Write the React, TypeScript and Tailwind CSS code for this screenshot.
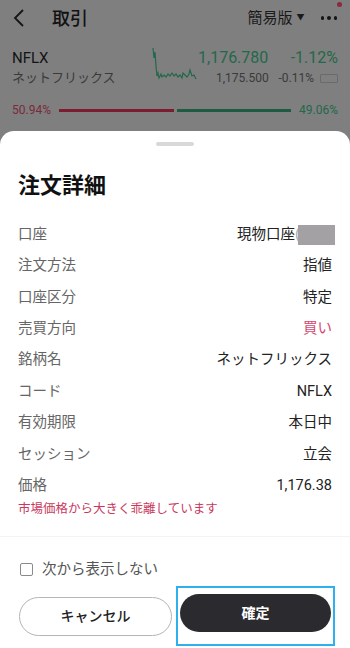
import React from 'react'

const font = { fontFamily: 'Roboto, "Noto Sans CJK JP", sans-serif' }

const rows: { label: string; value: string; red?: boolean }[] = [
  { label: '注文方法', value: '指値' },
  { label: '口座区分', value: '特定' },
  { label: '売買方向', value: '買い', red: true },
  { label: '銘柄名', value: 'ネットフリックス' },
  { label: 'コード', value: 'NFLX' },
  { label: '有効期限', value: '本日中' },
  { label: 'セッション', value: '立会' },
  { label: '価格', value: '1,176.38' },
]

const Spark = () => (
  <svg width="46" height="38" viewBox="0 0 46 38" className="shrink-0">
    <polyline
      fill="none"
      stroke="#23684a"
      strokeWidth="1.2"
      points="1,2 2,12 3,6 4,20 5,30 6,27 7,32 9,28 10,31 12,29 14,31 16,28 18,30 20,27 22,30 24,28 26,31 28,29 30,32 31,27 33,29 35,31 37,28 38,24 40,30 42,29 44,33"
    />
  </svg>
)

export default function App() {
  return (
    <div className="w-[350px] h-[648px] bg-[#7f7f7f] flex flex-col overflow-hidden" style={font}>
      {/* dimmed background screen */}
      <div className="h-[36px] flex items-center px-[13px] text-[#121212]">
        <svg width="12" height="18" viewBox="0 0 12 18" className="mr-[27px]">
          <polyline points="10,1 2,9 10,17" fill="none" stroke="#151515" strokeWidth="1.8" />
        </svg>
        <span className="text-[18px] font-medium">取引</span>
        <span className="ml-auto text-[15px] text-[#1a1a1a]">簡易版</span>
        <span className="ml-[4px] text-[8px] text-[#1a1a1a]">▼</span>
        <div className="relative ml-[16px] flex gap-[3px] items-center">
          <span className="w-[3.5px] h-[3.5px] rounded-full bg-[#151515]" />
          <span className="w-[3.5px] h-[3.5px] rounded-full bg-[#151515]" />
          <span className="w-[3.5px] h-[3.5px] rounded-full bg-[#151515]" />
          <span className="absolute -right-[5px] -top-[14px] w-[5px] h-[5px] rounded-full bg-[#8a2a3c]" />
        </div>
      </div>
      <div className="h-[56px] flex items-start pl-[12px] pr-[12px] pt-[12px]">
        <div className="w-[140px]">
          <div className="text-[15px] leading-[20px] text-[#141414]">NFLX</div>
          <div className="text-[13px] leading-[20px] text-[#3a3a3a]">ネットフリックス</div>
        </div>
        <div className="-mt-[2px]">
          <Spark />
        </div>
        <div className="flex-1 flex flex-col items-end">
          <div className="flex w-full justify-end text-[16px] leading-[20px] text-[#23684a]">
            <span>1,176.780</span>
            <span className="ml-auto">-1.12%</span>
          </div>
          <div className="flex w-full items-center text-[12px] leading-[20px] text-[#3a3a3a]">
            <span className="ml-[18px]">1,175.500</span>
            <span className="ml-auto">-0.11%</span>
            <span className="ml-[6px] w-[18px] h-[9px] border border-[#6a6a6a] rounded-[1px]" />
          </div>
        </div>
      </div>
      <div className="h-[36px] flex items-center px-[12px] gap-[8px] text-[12px]">
        <span className="text-[#7a2a3c]">50.94%</span>
        <div className="flex-1 flex gap-[3px]">
          <div className="flex-1 h-[3px] bg-[#7d1c30]" />
          <div className="flex-1 h-[3px] bg-[#1e5c42]" />
        </div>
        <span className="text-[#23684a]">49.06%</span>
      </div>

      {/* bottom sheet */}
      <div className="flex-1 bg-white rounded-t-[14px] flex flex-col mt-[3px]">
        <div className="flex justify-center pt-[11px]">
          <div className="w-[38px] h-[4px] rounded-full bg-[#d8d8d8]" />
        </div>
        <h1 className="px-[18px] mt-[26px] text-[22px] leading-[28px] font-bold text-[#111]">注文詳細</h1>
        <div className="px-[18px] mt-[19px] text-[14.5px]">
          <div className="h-[31.4px] flex items-center justify-between">
            <span className="text-[#666]">口座</span>
            <span className="flex items-center text-[#222]">
              現物口座
              <span className="text-[#aaa]">(</span>
              <span className="w-[37px] h-[20px] bg-[#a3a1a3] -ml-[2px] -mr-[3px]" />
            </span>
          </div>
          {rows.map((r) => (
            <div key={r.label} className="h-[31.4px] flex items-center justify-between">
              <span className="text-[#666]">{r.label}</span>
              <span className={r.red ? 'text-[#d24a72]' : 'text-[#222]'}>{r.value}</span>
            </div>
          ))}
          <div className="text-[12.5px] leading-[16px] text-[#c8385c] -mt-[1px]">市場価格から大きく乖離しています</div>
        </div>
        <div className="mt-[19px] border-t border-[#f4f4f4]" />
        <div className="px-[20px] mt-[22px] flex items-center gap-[9px]">
          <span className="w-[13px] h-[13px] border border-[#8a8a8a] rounded-[2px]" />
          <span className="text-[14.5px] text-[#555]">次から表示しない</span>
        </div>
        <div className="flex items-center pl-[19px] mt-[6px]">
          <button className="w-[153px] h-[39px] rounded-full border border-[#b5b5b5] text-[14px] font-medium text-[#222]">
            キャンセル
          </button>
          <div className="ml-[4px] border-[2px] border-[#2fb0ee] p-[2px] pt-[6px] pb-[12px]">
            <button className="w-[151px] h-[38px] rounded-full bg-[#2b2b2f] text-white text-[14px] font-bold">
              確定
            </button>
          </div>
        </div>
      </div>
    </div>
  )
}
